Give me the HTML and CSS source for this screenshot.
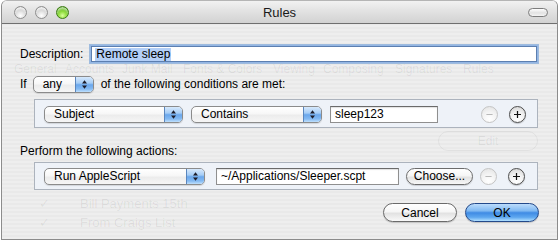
FILE: index.html
```html
<!DOCTYPE html>
<html>
<head>
<meta charset="utf-8">
<title>Rules</title>
<link rel="stylesheet" href="styles.css">
</head>
<body>
<div class="window">
  <div class="titlebar">
    <div class="lights">
      <span class="light gray"></span>
      <span class="light gray"></span>
      <span class="light green"></span>
    </div>
    <div class="title">Rules</div>
    <div class="right"><span class="pill"></span></div>
  </div>
  <div class="content">
    <div class="ghost">
      <span class="g g-general">General</span>
      <span class="g g-accounts">Accounts</span>
      <span class="g g-junk">Junk Mail</span>
      <span class="g g-fonts">Fonts &amp; Colors</span>
      <span class="g g-viewing">Viewing</span>
      <span class="g g-composing">Composing</span>
      <span class="g g-signatures">Signatures</span>
      <span class="g g-rules">Rules</span>
      <span class="g g-check g-c1">&#10003;</span>
      <span class="g g-item g-bill">Bill Payments 15th</span>
      <span class="g g-check g-c2">&#10003;</span>
      <span class="g g-item g-craigs">From Craigs List</span>
      <span class="g g-edit">Edit</span>
    </div>

    <div class="row desc-row">
      <span class="label">Description:</span>
      <div class="field field-desc"><span class="sel">Remote sleep</span></div>
    </div>

    <div class="row if-row">
      <span class="label">If</span>
      <div class="popup w-any"><span class="ptext">any</span><span class="cap"><svg width="7" height="11" viewBox="0 0 7 11"><path d="M3.5 1.2 L6 4.6 H1 Z M3.5 9.8 L6 6.4 H1 Z" fill="#1d1d2a"/></svg></span></div>
      <span class="label after">of the following conditions are met:</span>
    </div>

    <div class="box cond-box">
      <div class="popup w-subject"><span class="ptext">Subject</span><span class="cap"><svg width="7" height="11" viewBox="0 0 7 11"><path d="M3.5 1.2 L6 4.6 H1 Z M3.5 9.8 L6 6.4 H1 Z" fill="#1d1d2a"/></svg></span></div>
      <div class="popup w-contains"><span class="ptext">Contains</span><span class="cap"><svg width="7" height="11" viewBox="0 0 7 11"><path d="M3.5 1.2 L6 4.6 H1 Z M3.5 9.8 L6 6.4 H1 Z" fill="#1d1d2a"/></svg></span></div>
      <div class="field field-sm">sleep123</div>
      <span class="round minus"><svg width="17" height="17" viewBox="0 0 17 17"><path d="M5 8.5 H12" stroke="#b9b9b9" stroke-width="1.3"/></svg></span>
      <span class="round plus"><svg width="17" height="17" viewBox="0 0 17 17"><path d="M4.5 8.5 H12.5 M8.5 4.5 V12.5" stroke="#111" stroke-width="1.4"/></svg></span>
    </div>

    <div class="row perform-row">
      <span class="label">Perform the following actions:</span>
    </div>

    <div class="box act-box">
      <div class="popup w-script"><span class="ptext">Run AppleScript</span><span class="cap"><svg width="7" height="11" viewBox="0 0 7 11"><path d="M3.5 1.2 L6 4.6 H1 Z M3.5 9.8 L6 6.4 H1 Z" fill="#1d1d2a"/></svg></span></div>
      <div class="field field-path">~/Applications/Sleeper.scpt</div>
      <span class="btn small">Choose...</span>
      <span class="round minus"><svg width="17" height="17" viewBox="0 0 17 17"><path d="M5 8.5 H12" stroke="#b9b9b9" stroke-width="1.3"/></svg></span>
      <span class="round plus"><svg width="17" height="17" viewBox="0 0 17 17"><path d="M4.5 8.5 H12.5 M8.5 4.5 V12.5" stroke="#111" stroke-width="1.4"/></svg></span>
    </div>

    <div class="buttons">
      <span class="btn push">Cancel</span>
      <span class="btn push default">OK</span>
    </div>
  </div>
</div>
</body>
</html>
```

FILE: styles.css
```css
html, body {
  margin: 0;
  padding: 0;
  background: #ffffff;
}

body {
  font-family: "Lucida Grande", "Liberation Sans", Arial, sans-serif;
  font-size: 12px;
  color: #000;
}

.window {
  margin-left: 1px;
  width: 557px;
  height: 240px;
  box-sizing: border-box;
  border: 1px solid #8c8c8c;
  border-top-color: #b5b5b5;
  border-radius: 6px 6px 0 0;
  overflow: hidden;
  display: flex;
  flex-direction: column;
  background: repeating-linear-gradient(to bottom, #eeeeee 0, #eeeeee 2px, #e9e9e9 2px, #e9e9e9 4px);
}

/* ---------- title bar ---------- */
.titlebar {
  height: 22px;
  flex: none;
  display: grid;
  grid-template-columns: 1fr auto 1fr;
  align-items: center;
  background: linear-gradient(#f2f2f2 0%, #e4e4e4 40%, #d2d2d2 100%);
  border-bottom: 1px solid #6f6f6f;
}

.lights {
  display: flex;
  gap: 8px;
  padding-left: 12px;
  padding-top: 1px;
}

.light {
  width: 13px;
  height: 13px;
  box-sizing: border-box;
  border-radius: 50%;
}

.light.gray {
  border: 1px solid #8e8e8e;
  background: radial-gradient(circle at 50% 78%, #ffffff 0%, #e6e6e6 35%, #bcbcbc 80%, #a9a9a9 100%);
  box-shadow: inset 0 2px 2px rgba(255,255,255,0.8);
}

.light.green {
  border: 1px solid #3d7a16;
  background: radial-gradient(circle at 50% 78%, #d9ff9c 0%, #8fdc3c 40%, #4ea41a 85%, #3d8a10 100%);
  box-shadow: inset 0 2px 2px rgba(255,255,255,0.6);
}

.title {
  font-size: 13px;
  color: #1a1a1a;
  padding-top: 1px;
}

.right {
  display: flex;
  justify-content: flex-end;
  padding-right: 9px;
}

.pill {
  width: 20px;
  height: 9px;
  box-sizing: border-box;
  border: 1px solid #7d7d7d;
  border-radius: 5px;
  background: linear-gradient(#ffffff, #e2e2e2 55%, #f4f4f4);
}

/* ---------- content ---------- */
.content {
  position: relative;
  z-index: 0;
  flex: 1;
  display: flex;
  flex-direction: column;
  padding: 0 18px 0 18px;
}

.row {
  display: flex;
  align-items: center;
}

.label {
  line-height: 14px;
  white-space: nowrap;
}

.desc-row {
  margin-top: 20px;
  height: 20px;
}

.field {
  box-sizing: border-box;
  background: #fff;
  border: 1px solid #8f8f8f;
  border-top-color: #6a6a6a;
  box-shadow: inset 0 1px 1px rgba(0,0,0,0.12);
  display: flex;
  align-items: center;
  padding-left: 4px;
  white-space: nowrap;
}

.field-desc {
  flex: 1;
  height: 16px;
  margin-left: 8px;
  margin-right: 2px;
  padding-left: 3px;
  border-color: #5c7fb0;
  box-shadow: 0 0 0 1px #94b6e4, 0 0 0 2px rgba(126,166,216,0.7);
}

.sel {
  background: #b3cff7;
  line-height: 13px;
  padding: 0 1px;
}

.if-row {
  margin-top: 11px;
  height: 18px;
}

.if-row .after {
  margin-left: 7px;
}

/* popups */
.popup {
  box-sizing: border-box;
  height: 17px;
  border: 1px solid #8b8b8b;
  border-radius: 5px;
  background: linear-gradient(#ffffff 0%, #f7f7f7 45%, #ececec 55%, #f6f6f6 100%);
  box-shadow: 0 1px 1px rgba(0,0,0,0.12);
  display: flex;
  align-items: center;
  overflow: hidden;
  flex: none;
}

.ptext {
  flex: 1;
  padding-left: 9px;
  line-height: 14px;
  white-space: nowrap;
}

.cap {
  width: 18px;
  height: 100%;
  box-sizing: border-box;
  border-left: 1px solid #5a86bd;
  background: linear-gradient(#d7e9fc 0%, #a6cdf6 40%, #6aa7ec 52%, #84baf2 80%, #c0e0fd 100%);
  display: flex;
  align-items: center;
  justify-content: center;
}

.w-any { width: 61px; margin-left: 6px; }
.w-subject { width: 139px; }
.w-contains { width: 131px; margin-left: 8px; }
.w-script { width: 161px; }

/* boxes */
.box {
  box-sizing: border-box;
  margin-left: 14px;
  margin-right: 1px;
  border: 1px solid #acb3bd;
  background: #eef2f8;
  display: flex;
  align-items: center;
  padding: 0 11px 0 9px;
}

.cond-box {
  margin-top: 6px;
  height: 29px;
  padding-top: 1px;
}

.field-sm {
  width: 108px;
  height: 17px;
  margin-left: 8px;
}

.field-path {
  width: 183px;
  height: 17px;
  margin-left: 11px;
}

.round {
  width: 17px;
  height: 17px;
  box-sizing: border-box;
  border-radius: 50%;
  flex: none;
  display: flex;
  align-items: center;
  justify-content: center;
}

.round svg {
  display: block;
}

.minus {
  margin-left: auto;
  border: 1px solid #c4c4c4;
  background: radial-gradient(circle at 50% 80%, #ffffff 0%, #f3f3f3 50%, #e1e1e1 100%);
}

.plus {
  margin-left: 11px;
  border: 1px solid #4d4d4d;
  background: radial-gradient(circle at 50% 80%, #ffffff 0%, #f1f1f1 50%, #cfcfcf 100%);
  box-shadow: 0 1px 1px rgba(0,0,0,0.2);
}

.perform-row {
  margin-top: 15px;
  height: 16px;
}

.act-box {
  margin-top: 3px;
  height: 28px;
}

/* buttons */
.btn {
  box-sizing: border-box;
  display: flex;
  align-items: center;
  justify-content: center;
  white-space: nowrap;
  flex: none;
}

.btn.small {
  width: 67px;
  height: 17px;
  margin-left: 7px;
  border: 1px solid #6c6c6c;
  border-radius: 9px;
  background: linear-gradient(#ffffff 0%, #f6f6f6 45%, #e3e3e3 55%, #f7f7f7 100%);
  box-shadow: 0 1px 1px rgba(0,0,0,0.15);
  line-height: 14px;
}

.act-box .minus {
  margin-left: 7px;
}

.buttons {
  margin-top: 13px;
  display: flex;
  justify-content: flex-end;
  gap: 8px;
}

.btn.push {
  width: 74px;
  height: 19px;
  border-radius: 10px;
  border: 1px solid #6a6a6a;
  background: linear-gradient(#ffffff 0%, #f6f6f6 45%, #e2e2e2 55%, #f9f9f9 100%);
  box-shadow: 0 1px 1px rgba(0,0,0,0.18);
  line-height: 14px;
}

.btn.push.default {
  border-color: #23498a;
  background: linear-gradient(#bcdcfb 0%, #80b9f2 40%, #3f8be4 52%, #5ea7ef 78%, #b2e0ff 100%);
}

/* ghost layer (translucent window behind) */
.ghost {
  position: absolute;
  inset: 0;
  z-index: -1;
  pointer-events: none;
  color: rgba(0,0,0,0.07);
  font-size: 12px;
}

.g {
  position: absolute;
  white-space: nowrap;
  line-height: 14px;
}

.g-general { left: 12px; top: 38px; }
.g-accounts { left: 63px; top: 38px; }
.g-junk { left: 120px; top: 38px; }
.g-fonts { left: 181px; top: 38px; }
.g-viewing { left: 271px; top: 38px; }
.g-composing { left: 321px; top: 38px; }
.g-signatures { left: 393px; top: 38px; }
.g-rules { left: 461px; top: 38px; }
.g-item { left: 78px; font-size: 13px; }
.g-check { left: 37px; font-size: 13px; }
.g-c1, .g-bill { top: 173px; }
.g-c2, .g-craigs { top: 192px; }
.g-edit {
  left: 436px;
  top: 107px;
  width: 100px;
  height: 20px;
  box-sizing: border-box;
  border: 1px solid rgba(0,0,0,0.05);
  border-radius: 10px;
  text-align: center;
  line-height: 18px;
}
```
